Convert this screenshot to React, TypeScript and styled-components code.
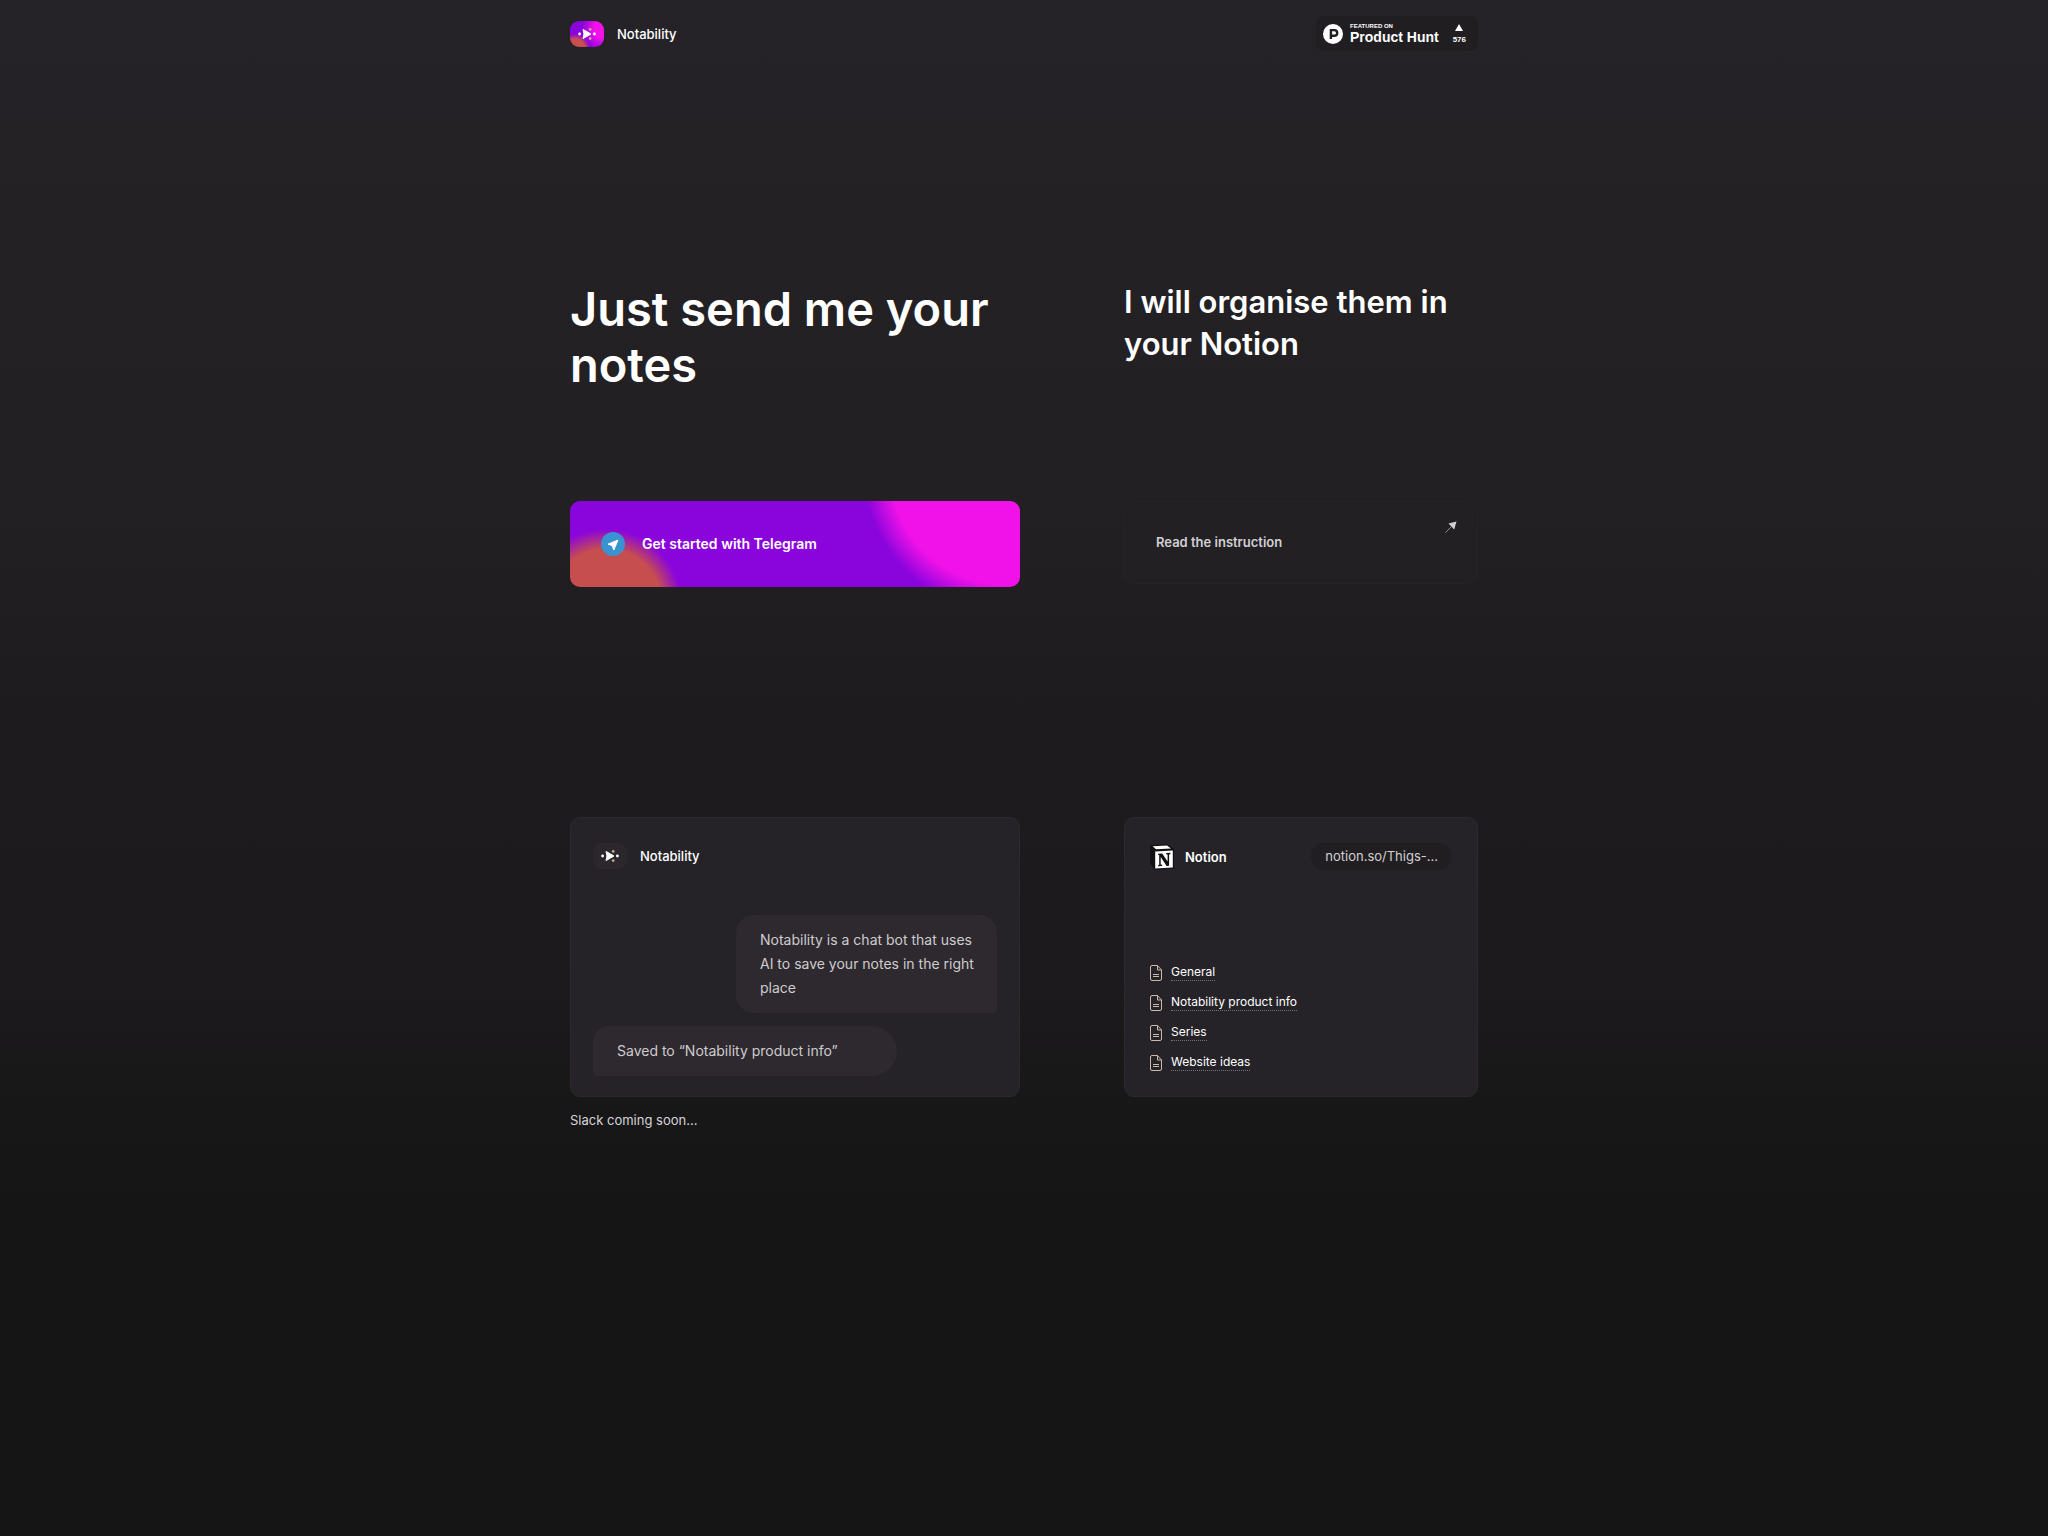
import React from "react";
import styled, { createGlobalStyle, css } from "styled-components";

const GlobalStyle = createGlobalStyle`
  *, *::before, *::after { box-sizing: border-box; }
  html { min-height: 100%; background: #151515; }
  body {
    margin: 0;
    min-height: 100vh;
    color: #fff;
    font-family: Inter, "Liberation Sans", sans-serif;
    font-size: 14px;
    line-height: 20px;
    background: linear-gradient(180deg, #252327 0%, #232124 16%, #222023 33%, #1d1b1e 47%, #1c1a1c 64%, #151515 79%);
  }
  h1, h2, p, ul { margin: 0; padding: 0; }
  a { color: inherit; text-decoration: none; }
`;

const Page = styled.div`
  width: 100%;
  max-width: 956px;
  margin: 0 auto;
  padding: 0 24px;
`;

const Header = styled.header`
  display: flex;
  align-items: center;
  justify-content: space-between;
  padding-top: 16px;
`;

const Brand = styled.div`
  display: flex;
  align-items: center;
  gap: 13px;
  font-size: 13px;
  font-weight: 500;
`;

const paint = css`
  background:
    radial-gradient(circle at 5px 28px, #c84e50 10px, transparent 15px),
    radial-gradient(circle at 34px 8px, #f012e8 10px, transparent 22px),
    #8a04dc;
`;

const LogoTile = styled.span<{ $vivid?: boolean }>`
  display: flex;
  align-items: center;
  justify-content: center;
  width: 34px;
  height: 26px;
  border-radius: 9px;
  background: #2b272c;
  ${(p) => p.$vivid && paint}
`;

const HuntBadge = styled.a`
  display: flex;
  align-items: center;
  width: 162px;
  height: 35px;
  padding: 0 12px 0 7px;
  gap: 7px;
  border-radius: 8px;
  background: #201e21;
  font-family: "Liberation Sans", Arial, sans-serif;
  font-weight: 700;
`;

const HuntText = styled.span`
  display: flex;
  flex: 1;
  flex-direction: column;
  font-size: 14px;
  line-height: 16px;
  white-space: nowrap;
`;

const HuntLabel = styled.span`
  font-size: 6px;
  line-height: 6px;
`;

const HuntVotes = styled.span`
  display: flex;
  flex-direction: column;
  align-items: center;
  gap: 4px;
  font-size: 8px;
  line-height: 9px;
`;

const Row = styled.section<{ $top: number }>`
  display: grid;
  grid-template-columns: minmax(0, 450fr) minmax(0, 354fr);
  column-gap: 104px;
  align-items: start;
  margin-top: ${(p) => p.$top}px;
  @media (max-width: 800px) {
    grid-template-columns: minmax(0, 1fr);
    row-gap: 32px;
  }
`;

const Title = styled.h1`
  font-size: 47px;
  line-height: 56px;
  font-weight: 600;
`;

const Subtitle = styled.h2`
  font-size: 31px;
  line-height: 42px;
  font-weight: 600;
`;

const StartLink = styled.a`
  display: flex;
  align-items: center;
  gap: 17px;
  height: 86px;
  padding: 0 31px;
  border-radius: 10px;
  font-weight: 600;
  background:
    radial-gradient(circle at 36px 104px, #c64e4e 56px, transparent 76px),
    radial-gradient(circle at 436px -32px, #f012e8 116px, transparent 143px),
    #8a04dc;
`;

const ReadLink = styled.a`
  display: flex;
  align-items: center;
  justify-content: space-between;
  height: 83px;
  padding: 0 20px 2px 31px;
  border: 1px solid #252327;
  border-radius: 10px;
  background: #222023;
  color: #d2d0d4;
  font-size: 13px;
  font-weight: 600;
  svg { align-self: flex-start; margin-top: 19px; }
`;

const Card = styled.article`
  display: flex;
  flex-direction: column;
  justify-content: space-between;
  min-height: 280px;
  padding: 25px 22px 20px;
  border: 1px solid #2c292e;
  border-radius: 10px;
  background: #252327;
`;

const Messages = styled.div`
  display: flex;
  flex-direction: column;
  gap: 13px;
`;

const Bubble = styled.p<{ $mine?: boolean }>`
  align-self: ${(p) => (p.$mine ? "flex-end" : "flex-start")};
  width: ${(p) => (p.$mine ? 261 : 304)}px;
  max-width: 100%;
  padding: 13px 20px 13px 24px;
  border-radius: ${(p) => (p.$mine ? "18px 18px 4px 18px" : "16px 25px 25px 4px")};
  background: #2d292e;
  color: #cfcccf;
  font-size: 14px;
  line-height: 24px;
`;

const Note = styled.p`
  margin-top: 13px;
  color: #d6d4d6;
  font-size: 13px;
`;

const CardHead = styled.div`
  display: flex;
  align-items: center;
  justify-content: space-between;
  padding: 0 3px;
`;

const NotionBrand = styled.div`
  display: flex;
  align-items: center;
  gap: 11px;
  font-size: 13px;
  font-weight: 600;
`;

const Address = styled.span`
  padding: 3px 14px 4px;
  border-radius: 14px;
  background: #201e21;
  color: #d2d0d4;
  font-size: 13px;
  white-space: nowrap;
`;

const PageList = styled.ul`
  display: flex;
  flex-direction: column;
  gap: 14px;
  && { padding: 0 3px 5px; }
  list-style: none;
`;

const PageItem = styled.li`
  display: flex;
  align-items: flex-end;
  gap: 9px;
  height: 16px;
`;

const PageLink = styled.a`
  border-bottom: 1px dotted #77727a;
  font-size: 12px;
  line-height: 17px;
`;

const Glyph = () => (
  <svg width="18" height="14" viewBox="0 0 18 14" aria-hidden="true">
    <path d="M5 2.4 13 7 5 11.6 6 7Z" fill="#fff" stroke="#fff" strokeLinejoin="round" />
    <circle cx="1.6" cy="7" r="1.4" fill="#fff" />
    <circle cx="16.4" cy="7" r="1.4" fill="#fff" />
    <circle cx="12.2" cy="2.4" r="1.4" fill="#c9a690" />
    <circle cx="12.2" cy="11.6" r="1.4" fill="#c9a690" />
  </svg>
);

const HuntIcon = () => (
  <svg width="20" height="20" viewBox="0 0 20 20" aria-hidden="true">
    <circle cx="10" cy="10" r="10" fill="#fff" />
    <path d="M7.9 15V6.1h3.5a2.8 2.8 0 0 1 0 5.6H8" fill="none" stroke="#201e21" strokeWidth="2.4" />
  </svg>
);

const TelegramIcon = () => (
  <svg width="24" height="24" viewBox="0 0 24 24" aria-hidden="true">
    <circle cx="12" cy="12" r="12" fill="#3b92d1" />
    <path d="M17 8 7 12.2 11 13.5 12.8 18Z" fill="#fff" stroke="#fff" strokeLinejoin="round" />
  </svg>
);

const ArrowIcon = () => (
  <svg width="12" height="12" viewBox="0 0 12 12" aria-hidden="true">
    <path d="M11.5.5 3.5 2.6 9.2 8.5Z" fill="#d2d0d4" />
    <path d="M7 5 .5 11.5" stroke="#8b888c" strokeWidth="1" />
  </svg>
);

const NotionIcon = () => (
  <svg width="24" height="26" viewBox="0 0 24 26" aria-hidden="true">
    <path d="M0 2 1.2 1 17.5.3 24 5V24.4L5.4 26 0 19.5Z" fill="#111" />
    <path d="M2.6 2.2 17 1.4 21 4.4 6 5.2Z" fill="#fff" />
    <path d="M5.2 7.4 22.8 6.4V23.4L5.2 24.6Z" fill="#fff" />
    <path d="M8 9.7 12.2 9.4 17.6 17.6V10.6L16.2 10.2V9.1L20.4 8.8V9.9L19.1 10.5V21.7L16.6 21.9 10.7 13V20.4L12.2 20.8V22L8 22.3V21.2L9.2 20.7V11.1L8 10.8Z" fill="#111" />
  </svg>
);

const FileIcon = () => (
  <svg width="12" height="16" viewBox="0 0 12 16" fill="none" stroke="#cdb9ab" aria-hidden="true">
    <path d="M7.5.5H2A1.5 1.5 0 0 0 .5 2v12A1.5 1.5 0 0 0 2 15.5h8a1.5 1.5 0 0 0 1.5-1.5V5Z" />
    <path d="M7.5.5V5h4" />
    <path d="M3 9.5h6M3 11.5h6" />
  </svg>
);

const pages = ["General", "Notability product info", "Series", "Website ideas"];

export default function App() {
  return (
    <>
      <GlobalStyle />
      <Page>
        <Header>
          <Brand>
            <LogoTile $vivid><Glyph /></LogoTile>
            Notability
          </Brand>
          <HuntBadge href="#product-hunt">
            <HuntIcon />
            <HuntText>
              <HuntLabel>FEATURED ON</HuntLabel>
              Product Hunt
            </HuntText>
            <HuntVotes>
              <svg width="8" height="7" viewBox="0 0 8 7" aria-hidden="true"><path d="M4 0 8 7H0Z" fill="#fff" /></svg>
              576
            </HuntVotes>
          </HuntBadge>
        </Header>
        <main>
          <Row $top={230}>
            <Title>Just send me your notes</Title>
            <Subtitle>I will organise them in your Notion</Subtitle>
          </Row>
          <Row $top={108}>
            <StartLink href="#telegram"><TelegramIcon />Get started with Telegram</StartLink>
            <ReadLink href="#instruction">Read the instruction<ArrowIcon /></ReadLink>
          </Row>
          <Row $top={230}>
            <div>
              <Card>
                <Brand>
                  <LogoTile><Glyph /></LogoTile>
                  Notability
                </Brand>
                <Messages>
                  <Bubble $mine>Notability is a chat bot that uses AI to save your notes in the right place</Bubble>
                  <Bubble>Saved to “Notability product info”</Bubble>
                </Messages>
              </Card>
              <Note>Slack coming soon...</Note>
            </div>
            <Card>
              <CardHead>
                <NotionBrand><NotionIcon />Notion</NotionBrand>
                <Address>notion.so/Thigs-...</Address>
              </CardHead>
              <PageList>
                {pages.map((name) => (
                  <PageItem key={name}>
                    <FileIcon />
                    <PageLink href="#page">{name}</PageLink>
                  </PageItem>
                ))}
              </PageList>
            </Card>
          </Row>
        </main>
      </Page>
    </>
  );
}
